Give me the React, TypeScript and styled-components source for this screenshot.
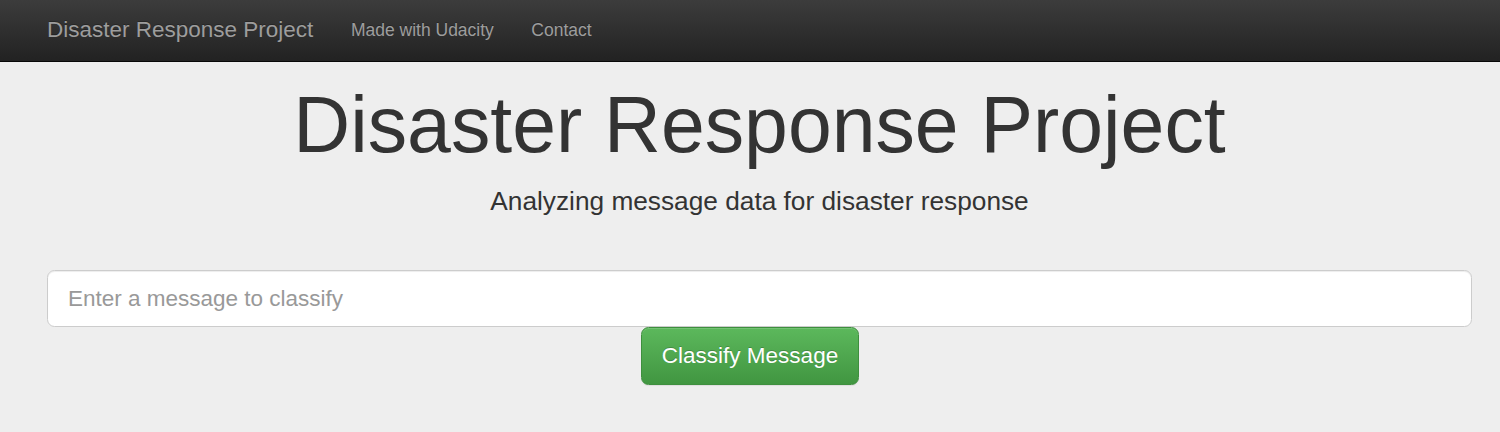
import React from "react";
import styled, { createGlobalStyle } from "styled-components";

const Global = createGlobalStyle`
  html, body { margin: 0; padding: 0; }
  body {
    background: #eeeeee;
    font-family: "Liberation Sans", Arial, Helvetica, sans-serif;
    color: #333333;
  }
  * { box-sizing: border-box; }
`;

const Navbar = styled.nav`
  height: 62px;
  display: flex;
  align-items: center;
  padding-left: 47px;
  background-image: linear-gradient(to bottom, #3c3c3c 0%, #222222 100%);
  border-bottom: 1px solid #080808;
`;

const Brand = styled.a`
  font-size: 22.5px;
  color: #9d9d9d;
  text-decoration: none;
  margin-right: 37.5px;
  line-height: 1;
  text-shadow: 0 -1px 0 rgba(0, 0, 0, 0.25);
`;

const NavLinks = styled.div`
  display: flex;
  gap: 37.5px;
`;

const NavLink = styled.a`
  font-size: 17.5px;
  color: #9d9d9d;
  text-decoration: none;
  line-height: 1;
  text-shadow: 0 -1px 0 rgba(0, 0, 0, 0.25);
`;

const Jumbotron = styled.main`
  padding: 20px 28px 40px 47px;
  display: flex;
  flex-direction: column;
  align-items: center;
`;

const Title = styled.h1`
  margin: 0;
  font-size: 78.75px;
  font-weight: 400;
  line-height: 86.6px;
  color: #333333;
  text-align: center;
`;

const Subtitle = styled.p`
  margin: 14px 0 0;
  font-size: 26.25px;
  line-height: 37.5px;
  color: #333333;
  text-align: center;
`;

const Form = styled.form`
  width: 100%;
  margin-top: 50px;
  display: flex;
  flex-direction: column;
`;

const Input = styled.input`
  width: 100%;
  height: 57px;
  padding: 0 20px;
  font-family: inherit;
  font-size: 22.5px;
  color: #555555;
  background: #ffffff;
  border: 1px solid #cccccc;
  border-radius: 7.5px;
  box-shadow: inset 0 1px 1px rgba(0, 0, 0, 0.075);
  outline: none;
  &::placeholder { color: #999999; }
`;

const ButtonRow = styled.div`
  display: flex;
  justify-content: center;
  margin-left: -19px;
`;

const Button = styled.button`
  height: 58px;
  padding: 0 20px;
  font-family: inherit;
  font-size: 22.5px;
  color: #ffffff;
  background-image: linear-gradient(to bottom, #5cb85c 0%, #419641 100%);
  border: 1px solid #3e8f3e;
  border-radius: 7.5px;
  text-shadow: 0 -1px 0 rgba(0, 0, 0, 0.2);
  box-shadow: inset 0 1px 0 rgba(255, 255, 255, 0.15), 0 1px 1px rgba(0, 0, 0, 0.075);
  cursor: pointer;
`;

export default function App() {
  return (
    <>
      <Global />
      <Navbar>
        <Brand href="#">Disaster Response Project</Brand>
        <NavLinks>
          <NavLink href="#">Made with Udacity</NavLink>
          <NavLink href="#">Contact</NavLink>
        </NavLinks>
      </Navbar>
      <Jumbotron>
        <Title>Disaster Response Project</Title>
        <Subtitle>Analyzing message data for disaster response</Subtitle>
        <Form onSubmit={(e) => e.preventDefault()}>
          <Input type="text" placeholder="Enter a message to classify" />
          <ButtonRow>
            <Button type="submit">Classify Message</Button>
          </ButtonRow>
        </Form>
      </Jumbotron>
    </>
  );
}
